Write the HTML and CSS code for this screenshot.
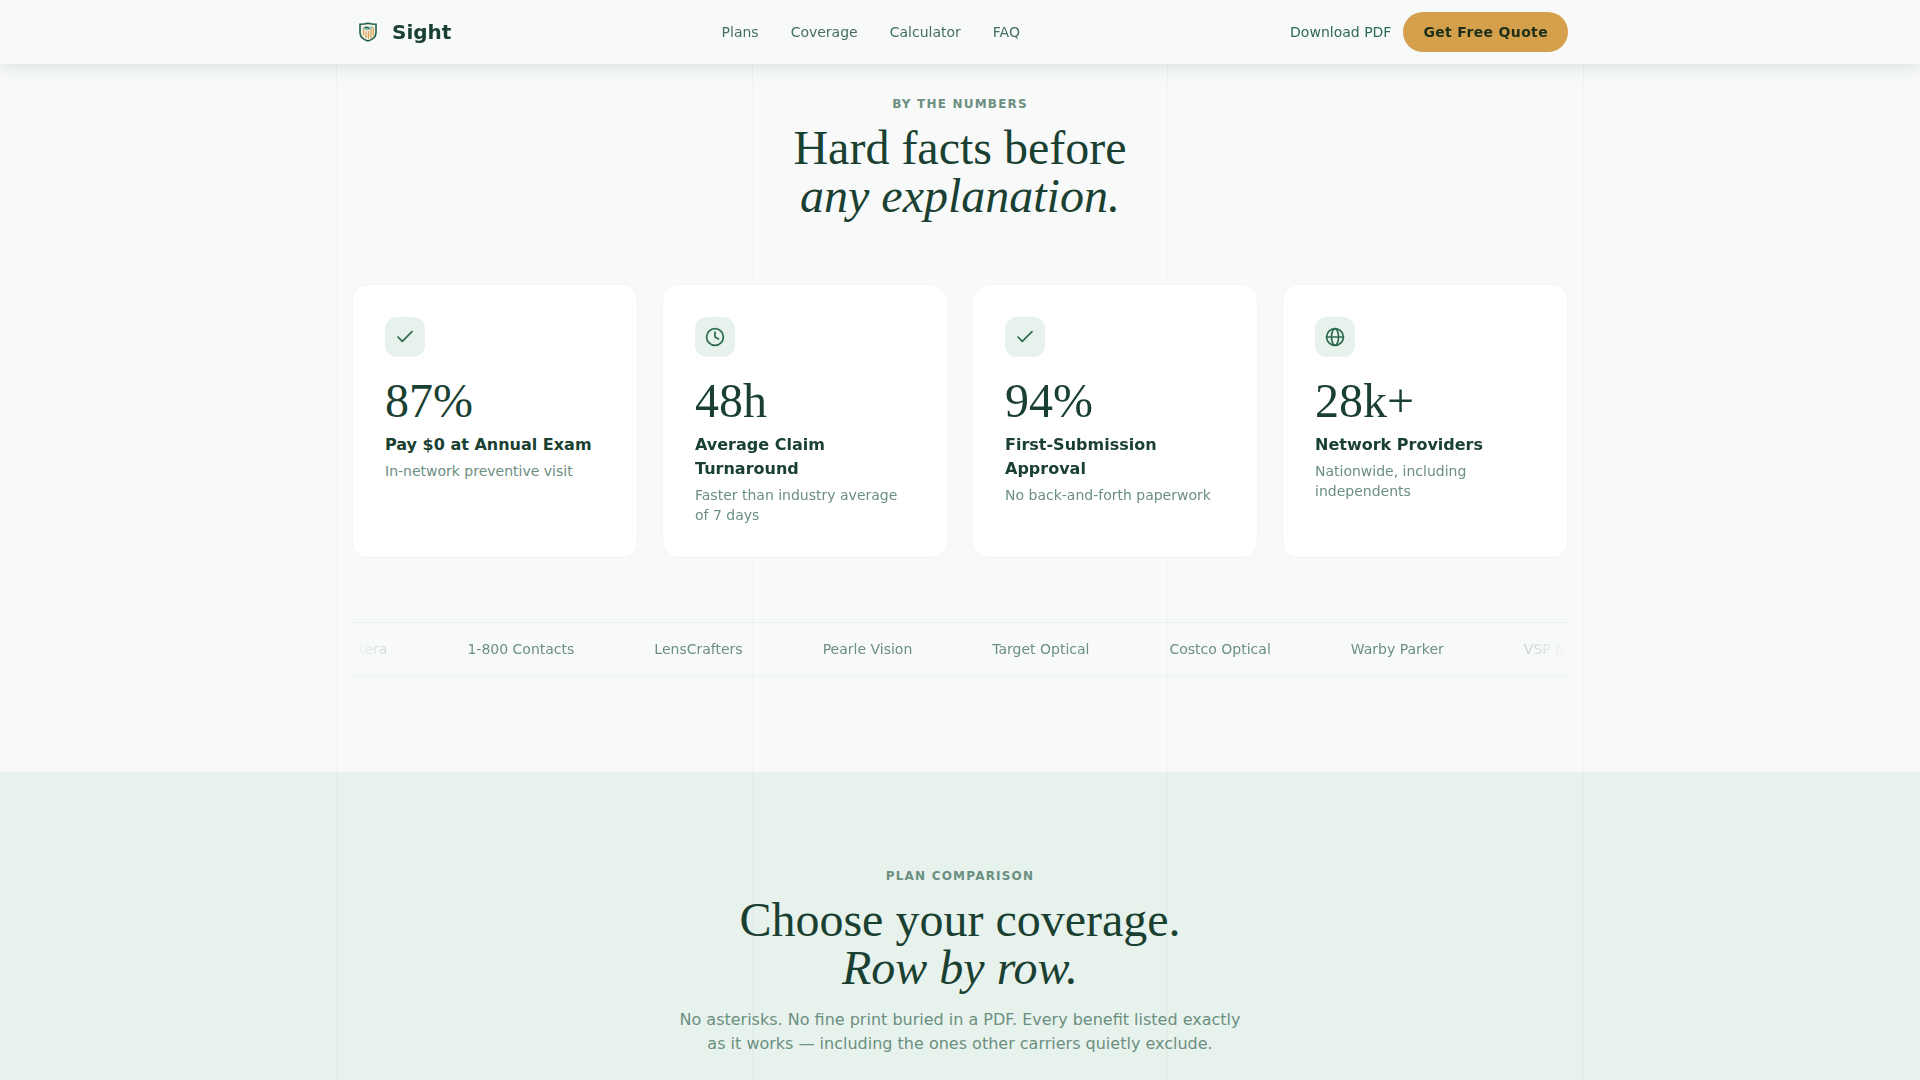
FILE: index.html
```html
<!DOCTYPE html>
<html lang="en">
<head>
    <meta charset="UTF-8">
    <meta name="viewport" content="width=device-width, initial-scale=1.0">
    <title>Sight</title>
    <link rel="stylesheet" href="styles.css">
</head>
<body>
    <div class="grid-lines" aria-hidden="true">
        <span></span><span></span><span></span>
    </div>

    <header class="site-header">
        <div class="container header-inner">
            <a class="logo" href="#">
                <svg width="32" height="32" viewBox="0 0 32 32" fill="none" aria-hidden="true">
                    <path d="M16 7.2C13.500 8 10.500 8.200 8 8.200V16.500C8 21 11.500 23.600 16 25C20.500 23.600 24 21 24 16.500V8.200C21.500 8.200 18.500 8 16 7.200Z" fill="#f7f3e4" stroke="#1f6049" stroke-width="1.600"/>
                    <path d="M11.500 13.500V19.500M14 15.500V22M16.500 15V23M19 13V22M21.300 11.500V19.500" stroke="#dba45c" stroke-width="1.400"/>
                    <path d="M10 12Q12.500 9.500 16 10.500Q19 11 21.500 10Q20 13 17.500 14Q13 15.500 10 12Z" fill="#9cc0ae"/>
                    <path d="M13 12Q15 10.500 17 12.500" stroke="#1f6049" stroke-width="1.200"/>
                </svg>
                Sight
            </a>
            <nav class="nav">
                <a href="#stats">Plans</a>
                <a href="#plans">Coverage</a>
                <a href="#calculator">Calculator</a>
                <a href="#faq">FAQ</a>
            </nav>
            <div class="header-actions">
                <a href="#pdf">Download PDF</a>
                <button type="button" class="btn">Get Free Quote</button>
            </div>
        </div>
    </header>

    <main>
        <section class="section" id="stats">
            <div class="container">
                <div class="section-head">
                    <p class="eyebrow">By the numbers</p>
                    <h2>Hard facts before<br><em>any explanation.</em></h2>
                </div>

                <div class="stats">
                    <article class="card">
                        <div class="card-icon">
                            <svg viewBox="0 0 20 20"><path d="M3 10l4.300 4.300L17 4.700"/></svg>
                        </div>
                        <p class="value">87%</p>
                        <h3>Pay $0 at Annual Exam</h3>
                        <p class="note">In-network preventive visit</p>
                    </article>
                    <article class="card">
                        <div class="card-icon">
                            <svg viewBox="0 0 20 20"><circle cx="10" cy="10" r="8.400"/><path d="M10 5v5l3.500 2"/></svg>
                        </div>
                        <p class="value">48h</p>
                        <h3>Average Claim Turnaround</h3>
                        <p class="note">Faster than industry average of 7 days</p>
                    </article>
                    <article class="card">
                        <div class="card-icon">
                            <svg viewBox="0 0 20 20"><path d="M3 10l4.300 4.300L17 4.700"/></svg>
                        </div>
                        <p class="value">94%</p>
                        <h3>First-Submission Approval</h3>
                        <p class="note">No back-and-forth paperwork</p>
                    </article>
                    <article class="card">
                        <div class="card-icon">
                            <svg viewBox="0 0 20 20"><circle cx="10" cy="10" r="8.400"/><ellipse cx="10" cy="10" rx="3.500" ry="8.400"/><path d="M1.600 10h16.800"/></svg>
                        </div>
                        <p class="value">28k+</p>
                        <h3>Network Providers</h3>
                        <p class="note">Nationwide, including independents</p>
                    </article>
                </div>

                <div class="marquee">
                    <div class="marquee-mask">
                        <ul class="marquee-track">
                            <li>tera</li>
                            <li>1-800 Contacts</li>
                            <li>LensCrafters</li>
                            <li>Pearle Vision</li>
                            <li>Target Optical</li>
                            <li>Costco Optical</li>
                            <li>Warby Parker</li>
                            <li>VSP Network</li>
                        </ul>
                    </div>
                </div>
            </div>
        </section>

        <section class="section section-tint" id="plans">
            <div class="container">
                <div class="section-head">
                    <p class="eyebrow">Plan comparison</p>
                    <h2>Choose your coverage.<br><em>Row by row.</em></h2>
                    <p class="lead">No asterisks. No fine print buried in a PDF. Every benefit listed exactly as it works — including the ones other carriers quietly exclude.</p>
                </div>
            </div>
        </section>
    </main>
</body>
</html>
```
FILE: styles.css
```css
:root {
    --ink: #1a4031;
    --green: #2d6a4f;
    --muted: #6b8f80;
    --bg: #f8faf9;
    --tint: #e8f2ed;
    --line: rgba(26, 64, 49, 0.06);
    --gold: #d4a04c;
}

* {
    box-sizing: border-box;
    margin: 0;
    padding: 0;
}

body {
    font-family: "DejaVu Sans", sans-serif;
    font-size: 16px;
    line-height: 24px;
    color: var(--ink);
    background: var(--bg);
    overflow-x: hidden;
}

a {
    color: inherit;
    text-decoration: none;
}

.container {
    max-width: 1248px;
    margin: 0 auto;
    padding: 0 16px;
}

/* vertical page rules, behind the cards but over the section backgrounds */
.grid-lines {
    position: fixed;
    inset: 0;
    z-index: 1;
    display: grid;
    grid-template-columns: repeat(3, 1fr);
    width: 100%;
    max-width: 1248px;
    margin: 0 auto;
    border-right: 1px solid var(--line);
    opacity: 0.6;
    pointer-events: none;
}

.grid-lines span {
    border-left: 1px solid var(--line);
}

/* Header */
.site-header {
    position: fixed;
    top: 0;
    left: 0;
    right: 0;
    z-index: 10;
    background: var(--bg);
    box-shadow: 0 4px 16px rgba(26, 64, 49, 0.12);
}

.header-inner {
    display: flex;
    align-items: center;
    justify-content: space-between;
    height: 64px;
    font-size: 14px;
}

.logo {
    display: flex;
    align-items: center;
    gap: 8px;
    font-size: 20px;
    font-weight: 700;
}

.nav {
    display: flex;
    gap: 32px;
    color: #44705d;
}

.header-actions {
    display: flex;
    align-items: center;
    gap: 12px;
    color: var(--green);
}

.btn {
    height: 40px;
    padding: 0 20px;
    border: none;
    border-radius: 20px;
    background: var(--gold);
    color: #1c2e17;
    font-family: inherit;
    font-size: 14px;
    font-weight: 700;
    letter-spacing: 0.025em;
    cursor: pointer;
}

/* Sections */
.section {
    padding: 96px 0;
}

.section-tint {
    background: var(--tint);
}

.section-head {
    text-align: center;
}

.eyebrow {
    margin-bottom: 12px;
    font-size: 12px;
    font-weight: 700;
    line-height: 16px;
    letter-spacing: 0.1em;
    text-transform: uppercase;
    color: var(--muted);
}

h2 {
    font-family: "Liberation Serif", serif;
    font-size: 48px;
    font-weight: 400;
    line-height: 48px;
}

.lead {
    max-width: 576px;
    margin: 16px auto 0;
    color: var(--muted);
}

/* Stat cards */
.stats {
    display: grid;
    grid-template-columns: repeat(4, 1fr);
    gap: 24px;
    margin: 64px 0;
}

.card {
    position: relative;
    z-index: 2;
    padding: 32px;
    border: 1px solid #f1f5f3;
    border-radius: 16px;
    background: #fff;
}

.card-icon {
    display: flex;
    align-items: center;
    justify-content: center;
    width: 40px;
    height: 40px;
    margin-bottom: 20px;
    border-radius: 12px;
    background: var(--tint);
}

.card-icon svg {
    width: 20px;
    height: 20px;
    fill: none;
    stroke: var(--green);
    stroke-width: 1.7;
    stroke-linecap: round;
    stroke-linejoin: round;
}

.value {
    margin-bottom: 8px;
    font-family: "Liberation Serif", serif;
    font-size: 48px;
    line-height: 48px;
}

h3 {
    margin-bottom: 4px;
    font-size: 16px;
    font-weight: 700;
}

.note {
    font-size: 14px;
    line-height: 20px;
    color: var(--muted);
}

/* Partner marquee */
.marquee {
    padding: 16px 0;
    border-top: 1px solid #edf2ef;
    border-bottom: 1px solid #edf2ef;
}

.marquee-mask {
    overflow: hidden;
    -webkit-mask-image: linear-gradient(90deg, transparent, #000 10%, #000 90%, transparent);
    mask-image: linear-gradient(90deg, transparent, #000 10%, #000 90%, transparent);
}

.marquee-track {
    display: flex;
    gap: 80px;
    padding-left: 7px;
    list-style: none;
    font-size: 14px;
    line-height: 20px;
    white-space: nowrap;
    color: var(--muted);
}
```
